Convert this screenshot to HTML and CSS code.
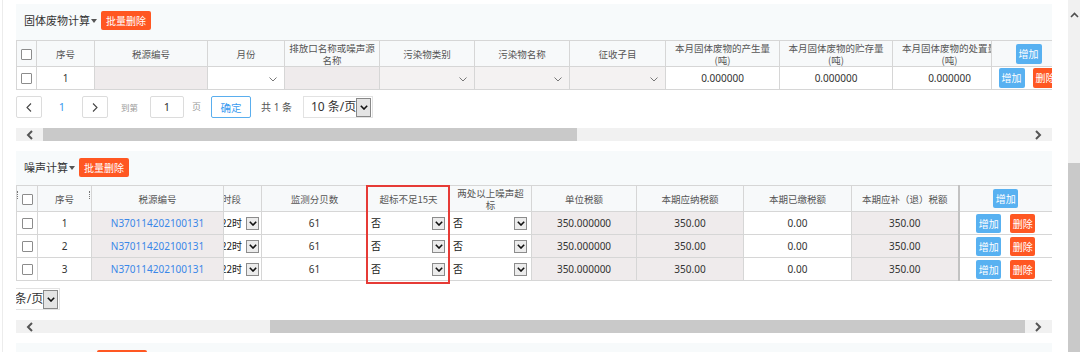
FILE: index.html
```html
<!DOCTYPE html>
<html lang="zh-CN">
<head>
<meta charset="utf-8">
<title>税源计算</title>
<link rel="stylesheet" href="styles.css">
</head>
<body>
<div class="page">
  <div class="edge"></div>
  <main class="content">
    <section class="panel">
      <div class="panel-head head-tall">
        <span class="panel-title">固体废物计算<i class="caret"></i></span>
        <button class="btn btn-orange">批量删除</button>
      </div>
      <div class="table-clip">
        <table class="grid grid-waste">
          <colgroup><col><col><col><col><col><col><col><col><col><col><col><col></colgroup>
          <thead>
            <tr>
              <th><span class="cb"></span></th>
              <th>序号</th>
              <th>税源编号</th>
              <th>月份</th>
              <th>排放口名称或噪声源<br>名称</th>
              <th>污染物类别</th>
              <th>污染物名称</th>
              <th>征收子目</th>
              <th>本月固体废物的产生量<br>(吨)</th>
              <th>本月固体废物的贮存量<br>(吨)</th>
              <th><div class="wide">本月固体废物的处置量<br>(吨)</div></th>
              <th><button class="btn btn-blue btn-op">增加</button></th>
            </tr>
          </thead>
          <tbody>
            <tr>
              <td><span class="cb"></span></td>
              <td>1</td>
              <td class="ro"></td>
              <td class="sel"><svg class="chev" width="8" height="5" viewBox="0 0 8 5"><path d="M.5.5 4 4 7.5.5" fill="none" stroke="#777" stroke-width="1"/></svg></td>
              <td class="ro"></td>
              <td class="sel ro-soft"><svg class="chev" width="8" height="5" viewBox="0 0 8 5"><path d="M.5.5 4 4 7.5.5" fill="none" stroke="#777" stroke-width="1"/></svg></td>
              <td class="sel ro-soft"><svg class="chev" width="8" height="5" viewBox="0 0 8 5"><path d="M.5.5 4 4 7.5.5" fill="none" stroke="#777" stroke-width="1"/></svg></td>
              <td class="sel ro-soft"><svg class="chev" width="8" height="5" viewBox="0 0 8 5"><path d="M.5.5 4 4 7.5.5" fill="none" stroke="#777" stroke-width="1"/></svg></td>
              <td>0.000000</td>
              <td>0.000000</td>
              <td><div class="wide">0.000000</div></td>
              <td><div class="ops ops-waste"><button class="btn btn-blue btn-op">增加</button><button class="btn btn-orange btn-op">删除</button></div></td>
            </tr>
          </tbody>
        </table>
      </div>
      <div class="pager">
        <span class="pg-btn"><svg width="6" height="9" viewBox="0 0 6 9"><path d="M5 .5 1 4.5 5 8.5" fill="none" stroke="#444" stroke-width="1.1"/></svg></span>
        <span class="pg-num">1</span>
        <span class="pg-btn"><svg width="6" height="9" viewBox="0 0 6 9"><path d="M1 .5 5 4.5 1 8.5" fill="none" stroke="#444" stroke-width="1.1"/></svg></span>
        <span class="pg-goto">到第</span>
        <span class="pg-input">1</span>
        <span class="pg-page">页</span>
        <button class="pg-ok">确定</button>
        <span class="pg-total">共 1 条</span>
        <span class="pg-size">10 条/页<span class="dd-box dd-tall"><svg width="8" height="5" viewBox="0 0 8 5"><path d="M.8.8 4 4 7.2.8" fill="none" stroke="#111" stroke-width="1.6"/></svg></span></span>
      </div>
      <div class="hscroll">
        <span class="hs-arrow"><svg width="7" height="10" viewBox="0 0 7 10"><path d="M6 1 2 5l4 4" fill="none" stroke="#555" stroke-width="2"/></svg></span>
        <span class="hs-track"><span class="hs-thumb" style="margin-left:0;width:534px"></span></span>
        <span class="hs-arrow"><svg width="7" height="10" viewBox="0 0 7 10"><path d="M1 1l4 4-4 4" fill="none" stroke="#555" stroke-width="2"/></svg></span>
      </div>
    </section>

    <section class="panel panel-next">
      <div class="panel-head">
        <span class="panel-title">噪声计算<i class="caret"></i></span>
        <button class="btn btn-orange">批量删除</button>
      </div>
      <div class="table-wrap">
        <table class="grid grid-noise">
          <colgroup><col><col><col><col><col><col><col><col><col><col><col><col></colgroup>
          <thead>
            <tr>
              <th class="has-grip"><span class="grip grip-left"></span><span class="cb"></span></th>
              <th class="has-grip">序号<span class="grip grip-right"></span></th>
              <th>税源编号</th>
              <th><div class="clip-right clip-head">时段</div></th>
              <th>监测分贝数</th>
              <th>超标不足15天</th>
              <th>两处以上噪声超<br>标</th>
              <th>单位税额</th>
              <th>本期应纳税额</th>
              <th>本期已缴税额</th>
              <th>本期应补（退）税额</th>
              <th class="fixed-op"><button class="btn btn-blue btn-op2">增加</button></th>
            </tr>
          </thead>
          <tbody>
            <tr>
              <td><span class="cb"></span></td>
              <td>1</td>
              <td class="ro"><span class="link">N370114202100131</span></td>
              <td><div class="clip-right">22时<span class="dd-box"><svg width="8" height="5" viewBox="0 0 8 5"><path d="M.8.8 4 4 7.2.8" fill="none" stroke="#111" stroke-width="1.6"/></svg></span></div></td>
              <td>61</td>
              <td><div class="dd">否<span class="dd-box"><svg width="8" height="5" viewBox="0 0 8 5"><path d="M.8.8 4 4 7.2.8" fill="none" stroke="#111" stroke-width="1.6"/></svg></span></div></td>
              <td><div class="dd">否<span class="dd-box"><svg width="8" height="5" viewBox="0 0 8 5"><path d="M.8.8 4 4 7.2.8" fill="none" stroke="#111" stroke-width="1.6"/></svg></span></div></td>
              <td class="ro">350.000000</td>
              <td class="ro">350.00</td>
              <td class="paid">0.00</td>
              <td class="ro">350.00</td>
              <td class="fixed-op"><div class="ops ops-noise"><button class="btn btn-blue btn-op2">增加</button><button class="btn btn-orange btn-op2">删除</button></div></td>
            </tr>
            <tr>
              <td><span class="cb"></span></td>
              <td>2</td>
              <td class="ro"><span class="link">N370114202100131</span></td>
              <td><div class="clip-right">22时<span class="dd-box"><svg width="8" height="5" viewBox="0 0 8 5"><path d="M.8.8 4 4 7.2.8" fill="none" stroke="#111" stroke-width="1.6"/></svg></span></div></td>
              <td>61</td>
              <td><div class="dd">否<span class="dd-box"><svg width="8" height="5" viewBox="0 0 8 5"><path d="M.8.8 4 4 7.2.8" fill="none" stroke="#111" stroke-width="1.6"/></svg></span></div></td>
              <td><div class="dd">否<span class="dd-box"><svg width="8" height="5" viewBox="0 0 8 5"><path d="M.8.8 4 4 7.2.8" fill="none" stroke="#111" stroke-width="1.6"/></svg></span></div></td>
              <td class="ro">350.000000</td>
              <td class="ro">350.00</td>
              <td class="paid">0.00</td>
              <td class="ro">350.00</td>
              <td class="fixed-op"><div class="ops ops-noise"><button class="btn btn-blue btn-op2">增加</button><button class="btn btn-orange btn-op2">删除</button></div></td>
            </tr>
            <tr>
              <td><span class="cb"></span></td>
              <td>3</td>
              <td class="ro"><span class="link">N370114202100131</span></td>
              <td><div class="clip-right">22时<span class="dd-box"><svg width="8" height="5" viewBox="0 0 8 5"><path d="M.8.8 4 4 7.2.8" fill="none" stroke="#111" stroke-width="1.6"/></svg></span></div></td>
              <td>61</td>
              <td><div class="dd">否<span class="dd-box"><svg width="8" height="5" viewBox="0 0 8 5"><path d="M.8.8 4 4 7.2.8" fill="none" stroke="#111" stroke-width="1.6"/></svg></span></div></td>
              <td><div class="dd">否<span class="dd-box"><svg width="8" height="5" viewBox="0 0 8 5"><path d="M.8.8 4 4 7.2.8" fill="none" stroke="#111" stroke-width="1.6"/></svg></span></div></td>
              <td class="ro">350.000000</td>
              <td class="ro">350.00</td>
              <td class="paid">0.00</td>
              <td class="ro">350.00</td>
              <td class="fixed-op"><div class="ops ops-noise"><button class="btn btn-blue btn-op2">增加</button><button class="btn btn-orange btn-op2">删除</button></div></td>
            </tr>
          </tbody>
        </table>
        <div class="highlight"></div>
      </div>
      <div class="pager pager-cut">
        <span class="pg-size pg-shift">10 条/页<span class="dd-box dd-tall"><svg width="8" height="5" viewBox="0 0 8 5"><path d="M.8.8 4 4 7.2.8" fill="none" stroke="#111" stroke-width="1.6"/></svg></span></span>
      </div>
      <div class="hscroll">
        <span class="hs-arrow"><svg width="7" height="10" viewBox="0 0 7 10"><path d="M6 1 2 5l4 4" fill="none" stroke="#555" stroke-width="2"/></svg></span>
        <span class="hs-track"><span class="hs-thumb" style="margin-left:227px;width:755px"></span></span>
        <span class="hs-arrow"><svg width="7" height="10" viewBox="0 0 7 10"><path d="M1 1l4 4-4 4" fill="none" stroke="#555" stroke-width="2"/></svg></span>
      </div>
    </section>

    <section class="panel panel-next">
      <div class="panel-head">
        <span class="panel-title">&nbsp;</span>
        <button class="btn btn-orange btn-third">批量删除</button>
      </div>
    </section>
  </main>
  <div class="gutter"></div>
  <div class="vscroll">
    <div class="vs-up"><svg width="9" height="6" viewBox="0 0 9 6"><path d="M1 5 4.5 1.5 8 5" fill="none" stroke="#505050" stroke-width="1.6"/></svg></div>
    <div class="vs-thumb"></div>
  </div>
</div>
</body>
</html>
```

FILE: styles.css
```css
* { box-sizing: border-box; margin: 0; padding: 0; }
html, body { width: 1080px; height: 352px; overflow: hidden; background: #fff; }
body {
  font-family: "Noto Sans", "Noto Sans CJK SC", sans-serif;
  font-size: 10px;
  line-height: 1.2;
  color: #333;
}
.page { display: flex; height: 352px; }
.edge { width: 3px; flex: none; border-right: 1px solid #ececec; }
.content { width: 1036px; margin-left: 13px; padding-top: 4px; flex: none; overflow: hidden; }
.gutter { flex: 1; }
.vscroll { width: 12px; flex: none; background: #f1f1f1; display: flex; flex-direction: column; }
.vs-up { height: 163px; display: flex; justify-content: center; padding-top: 12px; }
.vs-thumb { flex: 1; background: #c9c9c9; }

/* panel */
.panel-next { margin-top: 10px; }
.panel-head {
  height: 34px;
  background: #f7fafb;
  display: flex;
  align-items: flex-start;
  padding: 7px 0 0 8px;
}
.head-tall { height: 36px; }
.panel-title {
  font-size: 11px;
  line-height: 19px;
  color: #333;
  display: flex;
  align-items: center;
  font-family: "Noto Sans CJK SC", sans-serif;
}
.caret {
  width: 0; height: 0;
  border-top: 4px solid #555;
  border-left: 3.5px solid transparent;
  border-right: 3.5px solid transparent;
  margin: 1px 4px 0 1px;
}
.btn {
  border: none;
  border-radius: 2px;
  color: #fff;
  font-family: "Noto Sans CJK SC", sans-serif;
  font-size: 10px;
  height: 19px;
  line-height: 19px;
  padding: 0 5px;
  white-space: nowrap;
}
.btn-orange { background: #ff5722; }
.btn-blue { background: #58b1f1; }
.btn-third { margin-left: 71px; }
.btn-op { width: 26px; height: 20px; line-height: 20px; padding: 0; }
.btn-op2 { width: 25px; height: 19px; line-height: 19px; padding: 0; }

/* tables */
.table-clip { width: 1036px; overflow: hidden; }
.table-wrap { position: relative; width: 1036px; }
.grid { border-collapse: collapse; table-layout: fixed; }
.grid th, .grid td {
  border: 1px solid #d6d6d6;
  padding: 0;
  text-align: center;
  vertical-align: middle;
  white-space: nowrap;
  overflow: hidden;
}
.grid th {
  height: 26px;
  background: #f7f9fa;
  color: #555;
  font-weight: normal;
  font-size: 9.5px;
  line-height: 12px;
  font-family: "Noto Sans CJK SC", sans-serif;
}
.grid td { height: 23px; color: #333; background: #fff; }
.grid td.ro { background: #efebec; }
.grid td.ro-soft { background: #f4f2f2; }
.grid td.sel { text-align: right; padding-right: 7px; }
.chev { display: inline-block; vertical-align: middle; }
.wide { width: 113px; text-align: center; }

.grid-waste { width: 1049px; }
.grid-waste col:nth-child(1) { width: 20px; }
.grid-waste col:nth-child(2) { width: 58px; }
.grid-waste col:nth-child(3) { width: 113px; }
.grid-waste col:nth-child(4) { width: 77px; }
.grid-waste col:nth-child(5) { width: 95px; }
.grid-waste col:nth-child(6) { width: 95px; }
.grid-waste col:nth-child(7) { width: 95px; }
.grid-waste col:nth-child(8) { width: 96px; }
.grid-waste col:nth-child(9) { width: 114px; }
.grid-waste col:nth-child(10) { width: 113px; }
.grid-waste col:nth-child(11) { width: 99px; }
.grid-waste col:nth-child(12) { width: 74px; }

.grid-noise { width: 1036px; }
.grid-noise col:nth-child(1) { width: 21px; }
.grid-noise col:nth-child(2) { width: 54px; }
.grid-noise col:nth-child(3) { width: 132px; }
.grid-noise col:nth-child(4) { width: 38px; }
.grid-noise col:nth-child(5) { width: 106px; }
.grid-noise col:nth-child(6) { width: 82px; }
.grid-noise col:nth-child(7) { width: 82px; }
.grid-noise col:nth-child(8) { width: 105px; }
.grid-noise col:nth-child(9) { width: 107px; }
.grid-noise col:nth-child(10) { width: 108px; }
.grid-noise col:nth-child(11) { width: 107px; }
.grid-noise col:nth-child(12) { width: 94px; }
.grid-noise th.fixed-op, .grid-noise td.fixed-op { border-left: 2px solid #c2c2c2; }

.cb {
  display: inline-block;
  width: 11px; height: 11px;
  border: 1px solid #8c8c8c;
  border-radius: 1px;
  background: #fff;
  vertical-align: middle;
}
.has-grip { position: relative; }
.grip {
  position: absolute;
  top: 5px;
  width: 1px; height: 8px;
  border-left: 1px dotted #777;
}
.grip-left { left: 0; }
.grip-right { right: 1px; }

.link { color: #3a87e8; }
.ops { display: flex; justify-content: center; }
.ops-waste { gap: 8px; }
.ops-noise { gap: 9px; }
.paid { padding-bottom: 3px; }

.clip-right {
  display: flex;
  justify-content: flex-end;
  align-items: center;
  gap: 4px;
  padding-right: 2px;
  overflow: hidden;
  font-family: "Noto Sans CJK SC", sans-serif;
  font-size: 10px;
  color: #222;
}
.clip-head { padding-right: 20px; font-size: 9.5px; color: #555; }
.dd {
  display: flex;
  justify-content: space-between;
  align-items: center;
  padding: 0 4px 0 3px;
  font-family: "Noto Sans CJK SC", sans-serif;
  font-size: 10px;
  color: #222;
}
.dd-box {
  width: 13px; height: 13px;
  flex: none;
  border: 1px solid #8c8c8c;
  background: #ececec;
  display: flex;
  align-items: center;
  justify-content: center;
}
.dd-tall { width: 15px; height: 19px; margin-left: auto; margin-right: 3px; background: #e4e4e4; border-color: #888; }

/* highlight annotation */
.highlight {
  position: absolute;
  left: 350px; top: 0;
  width: 84px; height: 99px;
  border: 2px solid #e63b36;
  pointer-events: none;
}

/* pager */
.pager { display: flex; align-items: center; height: 22px; margin-top: 6px; }
.pager-cut { margin-top: 7px; overflow: hidden; width: 1036px; }
.pg-btn {
  width: 26px; height: 22px;
  border: 1px solid #dcdcdc;
  border-radius: 2px;
  display: flex; align-items: center; justify-content: center;
  background: #fff;
}
.pg-num { width: 40px; text-align: center; color: #3a9bf0; font-size: 11px; }
.pg-goto { margin-left: 13px; font-size: 8.5px; color: #999; font-family: "Noto Sans CJK SC", sans-serif; }
.pg-input {
  margin-left: 12px;
  width: 34px; height: 22px;
  border: 1px solid #dcdcdc;
  border-radius: 2px;
  text-align: center;
  line-height: 20px;
  font-size: 11px;
}
.pg-page { margin-left: 8px; font-size: 9px; color: #999; font-family: "Noto Sans CJK SC", sans-serif; }
.pg-ok {
  margin-left: 10px;
  width: 40px; height: 22px;
  border: 1px solid #5aaeee;
  border-radius: 2px;
  background: #fff;
  color: #3a9bf0;
  font-family: "Noto Sans CJK SC", sans-serif;
  font-size: 10.5px;
}
.pg-total { margin-left: 10px; font-size: 10px; color: #555; }
.pg-size {
  margin-left: 11px;
  width: 70px; height: 22px;
  flex: none;
  border: 1px solid #e2e2e2;
  display: flex; align-items: center;
  padding-left: 7px;
  font-size: 12px;
  color: #333;
  white-space: nowrap;
}
.pg-shift { margin-left: -26px; }

/* horizontal scrollbar */
.hscroll { display: flex; height: 13px; margin-top: 10px; background: #f1f1f1; }
.hs-arrow { width: 27px; flex: none; display: flex; align-items: center; justify-content: center; }
.hs-track { flex: 1; display: flex; }
.hs-thumb { display: block; height: 13px; background: #c9c9c9; }
```
